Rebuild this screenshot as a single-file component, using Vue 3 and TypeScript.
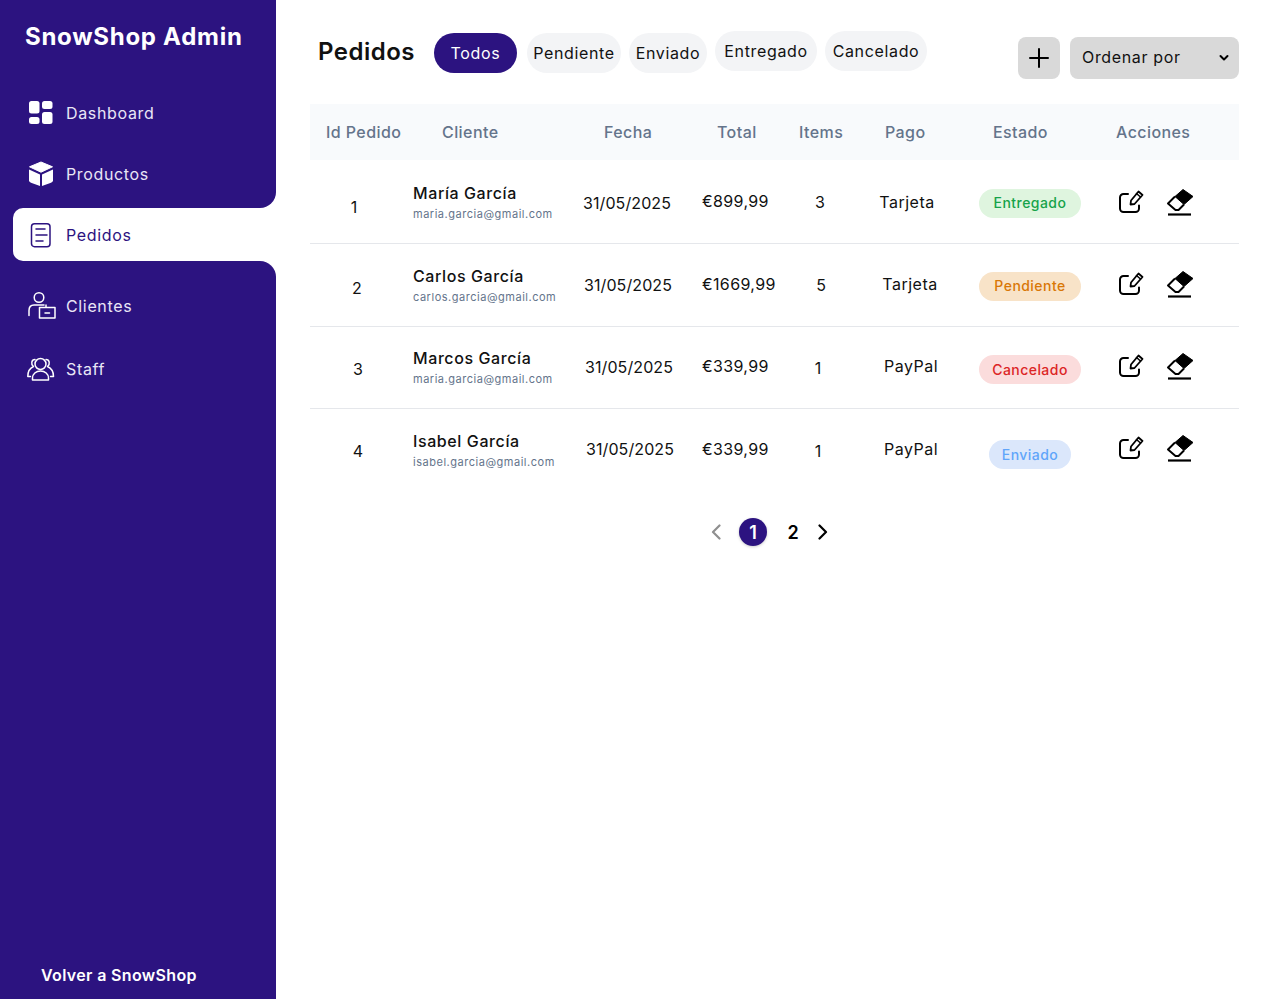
<script setup lang="ts">
interface Order {
  id: number
  name: string
  email: string
  date: string
  total: string
  items: number
  pay: string
  status: string
  cls: string
}
const orders: Order[] = [
  { id: 1, name: 'María García', email: 'maria.garcia@gmail.com', date: '31/05/2025', total: '€899,99', items: 3, pay: 'Tarjeta', status: 'Entregado', cls: 'green' },
  { id: 2, name: 'Carlos García', email: 'carlos.garcia@gmail.com', date: '31/05/2025', total: '€1669,99', items: 5, pay: 'Tarjeta', status: 'Pendiente', cls: 'orange' },
  { id: 3, name: 'Marcos García', email: 'maria.garcia@gmail.com', date: '31/05/2025', total: '€339,99', items: 1, pay: 'PayPal', status: 'Cancelado', cls: 'red' },
  { id: 4, name: 'Isabel García', email: 'isabel.garcia@gmail.com', date: '31/05/2025', total: '€339,99', items: 1, pay: 'PayPal', status: 'Enviado', cls: 'blue' },
]
const heads = ['Id Pedido', 'Cliente', 'Fecha', 'Total', 'Items', 'Pago', 'Estado', 'Acciones']
const pills = [
  { t: 'Todos', c: 'p-todos' },
  { t: 'Pendiente', c: 'p-pend' },
  { t: 'Enviado', c: 'p-env' },
  { t: 'Entregado', c: 'p-ent' },
  { t: 'Cancelado', c: 'p-can' },
]
</script>

<template>
  <div class="app">
    <aside class="side">
      <div class="side-top">
        <h1 class="brand">SnowShop Admin</h1>
        <a class="link">
          <svg class="ico" viewBox="0 0 28 28" fill="#fff">
            <rect x="2" y="2" width="10.5" height="12.5" rx="2.5" />
            <rect x="15" y="2" width="10.5" height="8" rx="2.5" />
            <rect x="2" y="18" width="10.5" height="7" rx="2.5" />
            <rect x="15" y="13" width="10.5" height="12" rx="2.5" />
          </svg>
          <span>Dashboard</span>
        </a>
        <a class="link">
          <svg class="ico" viewBox="0 0 28 28" fill="#fff">
            <path d="M14 2 25.5 6.8 14 12.2 2.5 6.8Z" stroke="#fff" stroke-linejoin="round" />
            <path d="M2 9.5 13 14.5V26L4 22.8Q2 22 2 20.5Z" />
            <path d="M26 9.5 15 14.5V26L24 22.8Q26 22 26 20.5Z" />
          </svg>
          <span>Productos</span>
        </a>
      </div>
      <div class="active-wrap">
        <a class="link active">
          <svg class="ico" viewBox="0 0 28 28" fill="none" stroke="#2c1380" stroke-width="1.5" stroke-linecap="round">
            <rect x="4.5" y="2.7" width="18.5" height="23" rx="3" />
            <path d="M9 8H18M9 14H20M9 20H16" />
          </svg>
          <span>Pedidos</span>
        </a>
      </div>
      <div class="side-bottom">
        <a class="link tall">
          <svg class="ico" viewBox="0 0 28 28" fill="none" stroke="#fff" stroke-width="1.5" stroke-linecap="round" stroke-linejoin="round">
            <circle cx="12" cy="5.5" r="4.8" />
            <path d="M2 23.5V18.5C2 15 4 13 7 13H17" />
            <path d="M12.5 15.5H28V26H12.5ZM19 15.5V13M18 21H22.5" />
          </svg>
          <span>Clientes</span>
        </a>
        <a class="link tall">
          <svg class="ico" viewBox="0 0 28 28" fill="none" stroke="#fff" stroke-width="1.5" stroke-linecap="round" stroke-linejoin="round">
            <circle cx="13.5" cy="9" r="5.5" />
            <path d="M5.5 25V23C5.5 19 9 16 13.5 16S21.5 19 21.5 23V25Z" />
            <path d="M8 4.5C4.5 4.5 3.5 9 6.5 11.5 3 13 .8 17 .8 21.5H3.5" />
            <path d="M19 4.5C22.5 4.5 23.5 9 20.5 11.5 24 13 26.5 17 26.5 21.5H23.5" />
          </svg>
          <span>Staff</span>
        </a>
        <div class="back">Volver a SnowShop</div>
      </div>
    </aside>

    <main class="main">
      <header class="head">
        <h2 class="title">Pedidos</h2>
        <div class="pills">
          <button v-for="p in pills" :key="p.t" class="pill" :class="p.c">{{ p.t }}</button>
        </div>
        <div class="tools">
          <button class="add" aria-label="Añadir">
            <svg width="22" height="22" viewBox="0 0 22 22" stroke="#000" stroke-width="2" stroke-linecap="round">
              <path d="M11 2V20M2 11H20" />
            </svg>
          </button>
          <div class="sort-wrap">
            <select class="sort">
              <option>Ordenar por</option>
            </select>
            <svg class="chev" width="10" height="8" viewBox="0 0 10 8" fill="none" stroke="#000" stroke-width="2" stroke-linecap="round" stroke-linejoin="round">
              <path d="M1.500 2 5 5.500 8.500 2" />
            </svg>
          </div>
        </div>
      </header>

      <section class="table">
        <div class="thead">
          <span v-for="h in heads" :key="h">{{ h }}</span>
        </div>
        <div v-for="o in orders" :key="o.id" class="row" :class="'r' + o.id">
          <div class="c-id">{{ o.id }}</div>
          <div class="c-client">
            <div class="name">{{ o.name }}</div>
            <div class="email">{{ o.email }}</div>
          </div>
          <div class="c-date">{{ o.date }}</div>
          <div class="c-total">{{ o.total }}</div>
          <div class="c-items">{{ o.items }}</div>
          <div class="c-pay">{{ o.pay }}</div>
          <div class="c-status"><span class="badge" :class="o.cls">{{ o.status }}</span></div>
          <div class="c-actions">
            <svg width="26" height="26" viewBox="0 0 26 26" fill="none" stroke="#000" stroke-width="2" stroke-linecap="round" stroke-linejoin="round">
              <path d="M10 5H5.5A3.5 3.5 0 0 0 2 8.5V19.5A3.5 3.5 0 0 0 5.500 23H17.500A3.500 3.500 0 0 0 21 19.500V16.500" />
              <path d="M12.500 15.500 13 11.500 20.500 2.500 24.500 6 16.500 15Z" stroke-width="1.800" />
              <path d="M18.500 4.500 22.500 8" stroke-width="1.500" />
            </svg>
            <svg width="28" height="28" viewBox="0 0 28 28" fill="none" stroke="#000" stroke-width="2" stroke-linejoin="round">
              <path d="M9 8.500 17 1.500 27 8.500 18 16.500Z" fill="#000" stroke-width="1" />
              <path d="M9 8.500 2 15.500 9.500 22H12.500L18 16.500" />
              <path d="M2 26.500H25" stroke-width="2.200" />
            </svg>
          </div>
        </div>
      </section>

      <nav class="pager">
        <svg width="10" height="16" viewBox="0 0 10 16" fill="none" stroke="#8f8f8f" stroke-width="2.200" stroke-linecap="round" stroke-linejoin="round"><path d="M8.500 1.500 2 8 8.500 14.500" /></svg>
        <span class="page on">1</span>
        <span class="page">2</span>
        <svg width="10" height="16" viewBox="0 0 10 16" fill="none" stroke="#000" stroke-width="2.200" stroke-linecap="round" stroke-linejoin="round"><path d="M1.500 1.500 8 8 1.500 14.500" /></svg>
      </nav>
    </main>
  </div>
</template>

<style>
html, body { margin: 0; background: #fff; }
</style>

<style scoped>
* { box-sizing: border-box; }
.app {
  display: flex;
  min-height: 999px;
  font-family: Inter, "Noto Sans", sans-serif;
  color: #000;
}
.side {
  width: 276px;
  flex: none;
  display: flex;
  flex-direction: column;
  color: #e9e6f6;
  font-size: 16px;
}
.side-top {
  background: #2c1380;
  height: 208px;
  padding-top: 19px;
  border-bottom-right-radius: 16px;
}
.brand {
  margin: 0 0 27px 25px;
  font-size: 24px;
  line-height: 36px;
  font-weight: 700;
  color: #fff;
  letter-spacing: 0.72px;
}
.link {
  display: flex;
  align-items: center;
  gap: 11px;
  height: 61px;
  padding-left: 27px;
  letter-spacing: 0.65px;
}
.ico { width: 28px; height: 28px; flex: none; overflow: visible; }
.active-wrap { background: #2c1380; padding-left: 13px; }
.link.active {
  height: 53px;
  padding-left: 14px;
  background: #fff;
  color: #2c1380;
  border-radius: 10px 0 0 10px;
}
.side-bottom {
  flex: 1;
  background: #2c1380;
  padding-top: 13px;
  border-top-right-radius: 16px;
  display: flex;
  flex-direction: column;
}
.link.tall { height: 63px; }
.back {
  margin-top: auto;
  padding: 0 0 12px 41px;
  line-height: 24px;
  font-weight: 600;
  color: #fff;
  letter-spacing: 0.35px;
}

.main { flex: 1; padding: 31px 33px 0 34px; }
.head { display: flex; align-items: flex-start; height: 73px; padding-left: 8px; }
.title {
  margin: 2px 20px 0 0;
  width: 96px;
  font-size: 24px;
  line-height: 38px;
  font-weight: 600;
  color: #111;
  white-space: nowrap;
  letter-spacing: 0.5px;
}
.pills { display: flex; gap: 8px; }
.pill {
  height: 40px;
  margin-top: 2px;
  padding: 0;
  border: 0;
  border-radius: 20px;
  background: #f3f4f6;
  font: inherit;
  font-size: 16px;
  color: #111;
  letter-spacing: 0.65px;
}
.p-todos { width: 83px; background: #2c1380; color: #fff; margin-right: 2px; }
.p-pend { width: 94px; }
.p-env { width: 78px; }
.p-ent { width: 102px; margin-top: 0; }
.p-can { width: 102px; margin-top: 0; }
.tools { margin: 6px 0 0 auto; display: flex; gap: 10px; }
.add {
  width: 42px;
  height: 42px;
  padding: 0;
  border: 0;
  border-radius: 8px;
  background: #d9d9d9;
  display: flex;
  align-items: center;
  justify-content: center;
}
.sort-wrap { position: relative; width: 169px; height: 42px; }
.sort {
  appearance: none;
  width: 100%;
  height: 100%;
  padding: 0 24px 2px 12px;
  border: 0;
  border-radius: 8px;
  background: #d9d9d9;
  font: inherit;
  font-size: 16px;
  color: #111;
  letter-spacing: 0.65px;
}
.chev { position: absolute; right: 10px; top: 17px; pointer-events: none; }

.thead {
  display: grid;
  grid-template-columns: 116px 162px 113px 82px 86px 108px 123px 1fr;
  align-items: center;
  height: 56px;
  padding-left: 16px;
  background: #f8fafc;
  color: #64748b;
  font-size: 16px;
  font-weight: 500;
  letter-spacing: 0.42px;
  white-space: nowrap;
}
.row {
  display: grid;
  grid-template-columns: 103px 159px 130px 78px 80px 119px 140px 1fr;
  align-items: center;
  font-size: 16px;
  color: #111;
  border-bottom: 1px solid #e5e7eb;
}
.r1 { height: 84px; --id: 15px; --date: 20px; --il: 0px; --ir: 0px; --pay: 25px;
  --y-id: 11px; --y-cl: 0px; --y-date: 3px; --y-tot: -1px; --y-it: 1px; --y-pay: 1px; --y-st: 3px; --y-ac: 0px; }
.r2 { height: 83px; --id: 9px; --date: 18px; --il: 2px; --ir: 0px; --pay: 19px;
  --y-id: 6px; --y-cl: -1px; --y-date: 0px; --y-tot: -2px; --y-it: 0px; --y-pay: -2px; --y-st: 2px; --y-ac: -2px; }
.r3 { height: 82px; --id: 7px; --date: 16px; --il: 0px; --ir: 4px; --pay: 17px;
  --y-id: 2px; --y-cl: -1px; --y-date: -2px; --y-tot: -4px; --y-it: 0px; --y-pay: -4px; --y-st: 4px; --y-ac: -4px; }
.r4 { height: 83px; --id: 7px; --date: 14px; --il: 0px; --ir: 4px; --pay: 17px; border-bottom: 0;
  --y-id: 0px; --y-cl: -1px; --y-date: -4px; --y-tot: -4px; --y-it: 0px; --y-pay: -4px; --y-st: 8px; --y-ac: -6px; }
.c-id { text-align: center; padding-right: var(--id); margin-top: var(--y-id); }
.c-client { margin-top: var(--y-cl); }
.name { font-weight: 500; line-height: 22px; letter-spacing: 0.6px; white-space: nowrap; }
.email { font-size: 11px; line-height: 16px; margin-top: 2px; color: #64748b; letter-spacing: 0.52px; white-space: nowrap; }
.c-date { text-align: center; padding-right: var(--date); margin-top: var(--y-date); letter-spacing: 0.1px; }
.c-total { margin-top: var(--y-tot); white-space: nowrap; letter-spacing: 0.35px; }
.c-items { text-align: center; padding-left: var(--il); padding-right: var(--ir); margin-top: var(--y-it); }
.c-pay { text-align: center; padding-right: var(--pay); margin-top: var(--y-pay); letter-spacing: 0.5px; }
.c-status { margin-top: var(--y-st); }
.badge {
  display: flex;
  align-items: center;
  justify-content: center;
  width: 102px;
  height: 29px;
  padding-bottom: 1px;
  border-radius: 15px;
  font-size: 14px;
  font-weight: 500;
  letter-spacing: 0.45px;
}
.green { background: #dff5df; color: #16a34a; }
.orange { background: #f8e3c8; color: #d97706; }
.red { background: #fbdcdc; color: #dc2626; }
.blue { background: #dbe7fb; color: #60a5fa; width: 82px; margin-left: 10px; }
.c-actions { display: flex; align-items: center; gap: 22px; margin-top: var(--y-ac); margin-left: -1px; }

.pager {
  display: flex;
  align-items: center;
  margin: 26px 0 0 401px;
  height: 28px;
}
.page {
  display: flex;
  align-items: center;
  justify-content: center;
  width: 10px;
  font-size: 18px;
  font-weight: 600;
  margin-right: 20px;
}
.page.on {
  width: 28px;
  height: 28px;
  margin: 0 21px 0 18px;
  border-radius: 50%;
  background: #2c1380;
  color: #fff;
  box-shadow: 0 1px 3px rgba(0, 0, 0, 0.2);
}
</style>
